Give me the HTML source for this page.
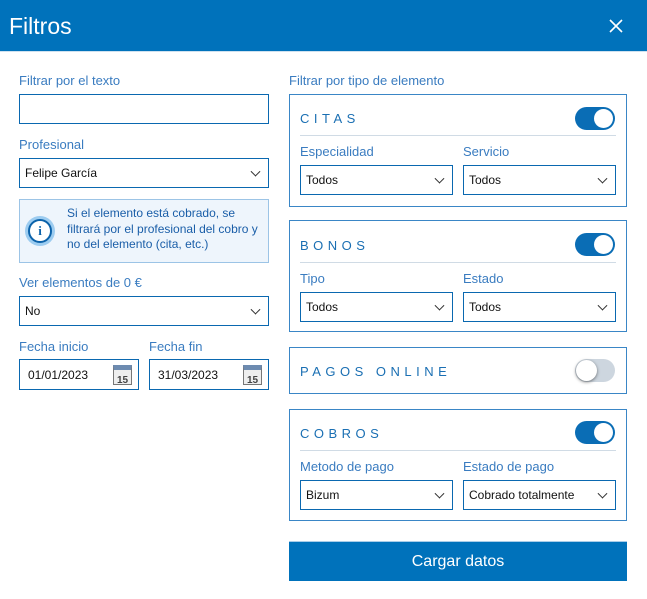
<!DOCTYPE html><html><head><meta charset="utf-8"><style>
*{box-sizing:border-box;margin:0;padding:0}
body{width:647px;height:599px;background:#fff;font-family:"Liberation Sans",sans-serif;position:relative;overflow:hidden}
.a{position:absolute}
.hdr{left:0;top:0;width:647px;height:52px;background:#0072bb;border-bottom:1px solid #cfe1ef}
.lbl{font-size:13px;color:#3a7cc0;white-space:nowrap}
.inp{border:1px solid #0a68b0;background:#fff;font-size:12px;color:#111;padding-left:5px;display:flex;align-items:center}
.sel::after{content:"";position:absolute;right:9px;top:50%;width:6px;height:6px;border-right:1.3px solid #333;border-bottom:1.3px solid #333;transform:translateY(-70%) rotate(45deg)}
.box{border:1px solid #3a86c6;left:289px;width:338px}
.ttl{font-size:13px;letter-spacing:4.5px;color:#1a6fb3}
.tg{width:40px;height:23px;border-radius:12px;background:#0a6db5}
.tg::after{content:"";position:absolute;right:2px;top:2px;width:19px;height:19px;border-radius:50%;background:#fff}
.tg.off{background:#cdd6df}
.tg.off::after{left:1px;right:auto;top:1px;width:21px;height:21px;box-shadow:0 1px 3px rgba(0,0,0,.5)}
.hr{height:1px;background:#d0dbe5}
.cal{width:19px;height:20px;border:1px solid #777;background:#eee;font-size:10px;font-weight:bold;color:#444;text-align:center;line-height:22px;border-top:5px solid #6d8bb0}
</style></head><body>
<div class="a hdr"></div>
<div class="a" style="left:9px;top:13px;font-size:23px;color:#fff">Filtros</div>
<svg class="a" style="left:609px;top:19px" width="14" height="14"><path d="M1 1L13 13M13 1L1 13" stroke="#fff" stroke-width="1.6"/></svg>

<div class="a lbl" style="left:19px;top:73px">Filtrar por el texto</div>
<div class="a inp" style="left:19px;top:94px;width:250px;height:30px"></div>
<div class="a lbl" style="left:19px;top:137px">Profesional</div>
<div class="a inp sel" style="left:19px;top:158px;width:250px;height:30px">Felipe García</div>
<div class="a" style="left:19px;top:199px;width:250px;height:64px;background:#eef5fc;border:1px solid #9cc4e6"></div>
<div class="a" style="left:25px;top:216px;width:30px;height:30px;border-radius:50%;background:#9cccf0"></div>
<div class="a" style="left:28px;top:219px;width:24px;height:24px;border-radius:50%;border:2px solid #0b62aa;background:#fff;font-size:13px;font-weight:bold;color:#0b62aa;text-align:center;line-height:20px;font-family:'Liberation Serif',serif">i</div>
<div class="a" style="left:67px;top:206px;width:200px;font-size:12px;line-height:15.5px;color:#1a5ea8">Si el elemento está cobrado, se filtrará por el profesional del cobro y no del elemento (cita, etc.)</div>
<div class="a lbl" style="left:19px;top:275px">Ver elementos de 0 €</div>
<div class="a inp sel" style="left:19px;top:296px;width:250px;height:30px">No</div>
<div class="a lbl" style="left:19px;top:339px">Fecha inicio</div>
<div class="a lbl" style="left:149px;top:339px">Fecha fin</div>
<div class="a inp" style="left:19px;top:359px;width:120px;height:31px;padding-left:8px">01/01/2023</div>
<div class="a cal" style="left:113px;top:365px">15</div>
<div class="a inp" style="left:149px;top:359px;width:120px;height:31px;padding-left:8px">31/03/2023</div>
<div class="a cal" style="left:243px;top:365px">15</div>

<div class="a lbl" style="left:289px;top:73px">Filtrar por tipo de elemento</div>

<div class="a box" style="top:94px;height:113px"></div>
<div class="a ttl" style="left:300px;top:111px">CITAS</div>
<div class="a tg" style="left:575px;top:107px"></div>
<div class="a hr" style="left:300px;top:135px;width:316px"></div>
<div class="a lbl" style="left:300px;top:144px">Especialidad</div>
<div class="a lbl" style="left:463px;top:144px">Servicio</div>
<div class="a inp sel" style="left:300px;top:165px;width:153px;height:30px">Todos</div>
<div class="a inp sel" style="left:463px;top:165px;width:153px;height:30px">Todos</div>

<div class="a box" style="top:220px;height:112px"></div>
<div class="a ttl" style="left:300px;top:238px">BONOS</div>
<div class="a tg" style="left:575px;top:233px"></div>
<div class="a hr" style="left:300px;top:262px;width:316px"></div>
<div class="a lbl" style="left:300px;top:271px">Tipo</div>
<div class="a lbl" style="left:463px;top:271px">Estado</div>
<div class="a inp sel" style="left:300px;top:292px;width:153px;height:30px">Todos</div>
<div class="a inp sel" style="left:463px;top:292px;width:153px;height:30px">Todos</div>

<div class="a box" style="top:347px;height:47px"></div>
<div class="a ttl" style="left:300px;top:364px">PAGOS ONLINE</div>
<div class="a tg off" style="left:575px;top:359px"></div>

<div class="a box" style="top:409px;height:112px"></div>
<div class="a ttl" style="left:300px;top:426px">COBROS</div>
<div class="a tg" style="left:575px;top:421px"></div>
<div class="a hr" style="left:300px;top:450px;width:316px"></div>
<div class="a lbl" style="left:300px;top:459px">Metodo de pago</div>
<div class="a lbl" style="left:463px;top:459px">Estado de pago</div>
<div class="a inp sel" style="left:300px;top:480px;width:153px;height:30px">Bizum</div>
<div class="a inp sel" style="left:463px;top:480px;width:153px;height:30px">Cobrado totalmente</div>

<div class="a" style="left:289px;top:541px;width:338px;height:40px;background:#0072bb;border-top:1px solid #a9cde9;color:#fff;font-size:16px;text-align:center;line-height:39px">Cargar datos</div>
</body></html>
